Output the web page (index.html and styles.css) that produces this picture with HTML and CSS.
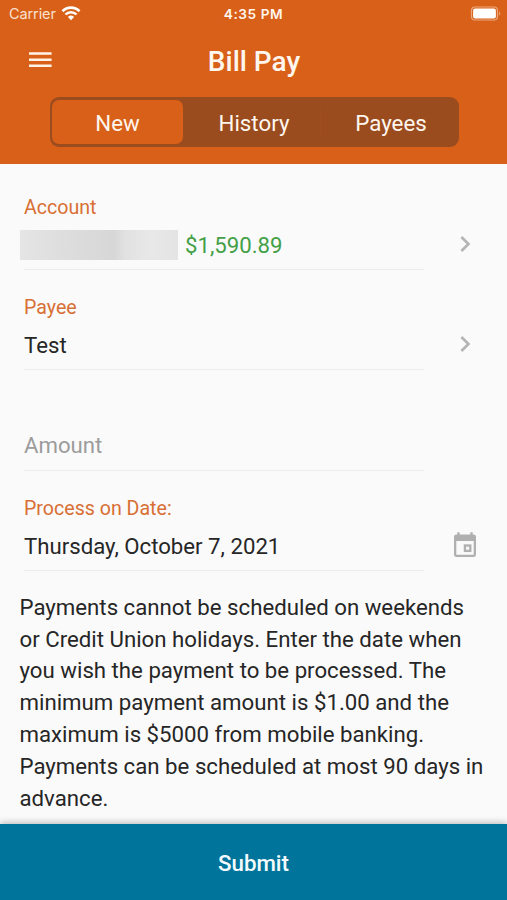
FILE: index.html
```html
<!DOCTYPE html>
<html lang="en">
<head>
<meta charset="utf-8">
<title>Bill Pay</title>
<link rel="stylesheet" href="styles.css">
</head>
<body>
<div class="screen">
  <header class="header">
    <div class="status">
      <div class="carrier"><span>Carrier</span>
        <svg width="20" height="15" viewBox="0 0 20 15" fill="none" stroke="#fff"><path d="M1.500 5.200a12 12 0 0 1 17 0" stroke-width="2.700"/><path d="M4.500 8.500a7.700 7.700 0 0 1 11 0" stroke-width="2.500"/><path d="M10 14.200l-3.100-3.300a4.500 4.500 0 0 1 6.200 0z" fill="#fff" stroke="none"/></svg>
      </div>
      <div class="time">4:35 PM</div>
      <svg class="battery" width="32" height="15" viewBox="0 0 32 15"><rect x="1.500" y="1" width="26" height="13" rx="3.500" fill="none" stroke="#eba77f" stroke-width="1.200"/><rect x="3.100" y="2.600" width="22.800" height="9.800" rx="2" fill="#fff"/><path d="M29.200 5.200a3 3 0 0 1 0 4.600z" fill="#eba77f"/></svg>
    </div>
    <div class="titlebar">
      <svg class="menu" width="23" height="16" viewBox="0 0 23 16" fill="#fff3e8"><path d="M0 .2h22.600v2.500H0zM0 6.400h22.600v2.500H0zM0 12.500h22.600V15H0z"/></svg>
      <h1>Bill Pay</h1>
    </div>
    <nav class="segments">
      <div class="segment active">New</div>
      <div class="segment divided">History</div>
      <div class="segment">Payees</div>
    </nav>
  </header>
  <main class="form">
    <section class="field">
      <div class="body"><div class="label">Account</div><div class="value"><span class="masked"></span><span class="money">$1,590.89</span></div></div>
      <svg class="icon" width="32" height="32" viewBox="0 0 24 24" fill="#b4b4b4"><path d="M8.590 16.590 13.170 12 8.590 7.410 10 6l6 6-6 6z"/></svg>
    </section>
    <section class="field">
      <div class="body"><div class="label">Payee</div><div class="value">Test</div></div>
      <svg class="icon" width="32" height="32" viewBox="0 0 24 24" fill="#b4b4b4"><path d="M8.590 16.590 13.170 12 8.590 7.410 10 6l6 6-6 6z"/></svg>
    </section>
    <section class="field">
      <div class="body"><div class="label"></div><div class="value placeholder">Amount</div></div>
    </section>
    <section class="field">
      <div class="body"><div class="label">Process on Date:</div><div class="value">Thursday, October 7, 2021</div></div>
      <svg class="icon" width="32" height="32" viewBox="0 0 32 32" fill="#b0b0b0"><path fill-rule="evenodd" d="M8.300 5.500V3.300h2.400v2.200h10.600V3.300h2.400v2.200h1.100c1.200 0 2.200 1 2.200 2.200v18c0 1.200-1 2.200-2.200 2.200H7.200c-1.200 0-2.200-1-2.200-2.200v-18c0-1.200 1-2.200 2.200-2.200zM7.300 12v13.800h17.400V12z"/><rect x="15.900" y="16.500" width="5.400" height="5.400" fill="none" stroke="#b0b0b0" stroke-width="2.300"/></svg>
    </section>
    <p class="note">Payments cannot be scheduled on weekends or Credit Union holidays. Enter the date when you wish the payment to be processed. The minimum payment amount is $1.00 and the maximum is $5000 from mobile banking. Payments can be scheduled at most 90 days in advance.</p>
  </main>
  <button class="submit">Submit</button>
</div>
</body>
</html>
```
FILE: styles.css
```css
* { box-sizing: border-box; }
body { margin: 0; font-family: Roboto, sans-serif; background: #fafafa; color: #262626; }
.screen { width: 507px; height: 900px; display: flex; flex-direction: column; overflow: hidden; }
.header { height: 164px; flex: none; background: #d86018; color: #fff6ee; }
.status { height: 27px; display: grid; grid-template-columns: 1fr auto 1fr; align-items: center; padding: 0 6px 0 9px; font-family: Inter, sans-serif; }
.carrier { display: flex; align-items: center; gap: 5px; font-size: 14.5px; letter-spacing: -.1px; color: #fbe0ce; }
.carrier svg { margin-top: -1px; }
.time { font-size: 13.7px; font-weight: 600; letter-spacing: .55px; margin-left: -3px; }
.battery { justify-self: end; margin: -1px -1px 0 0; }
.titlebar { height: 70px; display: grid; grid-template-columns: 100px 1fr 100px; align-items: center; }
.menu { margin: -5px 0 0 29px; }
h1 { margin: -2px 0 0 1px; font-size: 28px; font-weight: 500; text-align: center; }
.segments { width: 409px; height: 50px; margin: 0 0 0 50px; padding: 3px 2px; display: flex; border-radius: 9px; background: #9b4c1f; }
.segment { flex: 1; display: flex; align-items: center; justify-content: center; padding-top: 2px; font-size: 22.3px; }
.active { flex: 0 0 131px; background: #d86018; border-radius: 7px; }
.divided { flex: 0 0 142px; background: linear-gradient(#a04e1e, #a04e1e) right 4px center / 1px 27px no-repeat; }
.form { flex: 1; min-height: 0; padding: 6px 20px 0; }
.field { height: 100.2px; display: flex; padding-left: 4px; }
.body { width: 400px; border-bottom: 1px solid #ececec; padding-top: 26px; }
.label { height: 24px; line-height: 24px; font-size: 19.6px; color: #d86f34; }
.value { height: 49px; padding-top: 1px; line-height: 48px; font-size: 22.2px; display: flex; align-items: center; }
.masked { width: 158px; height: 30px; margin: 0 7px 0 -4px; background: linear-gradient(90deg, #e5e5e5, #dedede 25%, #d7d7d7 60%, #e1e1e1 66%, #e8e8e8 82%, #e4e4e4); }
.money { color: #43a047; }
.placeholder { color: #9c9c9c; }
.icon { margin: 58px 0 0 25px; }
.note { margin: 21px -2px 0 -.5px; font-size: 22.22px; line-height: 31.8px; }
.submit { flex: none; height: 76px; border: 0; padding: 2px 0 0; background: #00749a; color: #f4fbff; font: 500 22.3px Roboto, sans-serif; box-shadow: 0 -1px 7px rgba(0,0,0,.28); }
```
